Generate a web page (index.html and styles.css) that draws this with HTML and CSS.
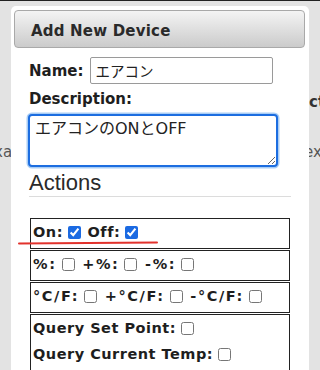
FILE: index.html
```html
<!DOCTYPE html>
<html lang="ja">

<head>
    <meta charset="UTF-8">
    <meta name="viewport" content="width=device-width, initial-scale=1.0">
    <title>Add New Device</title>
    <link rel="stylesheet" href="styles.css">
</head>

<body>
    <!-- The page behind the dialog -->
    <div class="page">
        <p class="bg-line bg-bold">ct</p>
        <p class="bg-line bg-split"><span class="bg-left">xa</span><span class="bg-right">ex</span></p>
    </div>

    <!-- The dialog -->
    <div class="dialog">
        <div class="dialog-header">Add New Device</div>
        <div class="dialog-body">
            <div class="name-row">
                <label for="name">Name:</label>
                <input id="name" type="text" value="エアコン">
            </div>
            <label class="desc-label" for="desc">Description:</label>
            <textarea id="desc">エアコンのONとOFF</textarea>
            <h2 class="section-title">Actions</h2>

            <div class="action-box">On:<input type="checkbox" checked> Off:<input type="checkbox" checked></div>
            <div class="action-box wide">%:<input type="checkbox"> +%:<input type="checkbox"> -%:<input type="checkbox"></div>
            <div class="action-box wide">°C/F:<input type="checkbox"> +°C/F:<input type="checkbox"> -°C/F:<input type="checkbox"></div>
            <div class="action-box tall">
                <div class="action-line">Query Set Point:<input type="checkbox"></div>
                <div class="action-line">Query Current Temp:<input type="checkbox"></div>
            </div>
        </div>
    </div>

    <!-- Hand drawn red underline -->
    <div class="mark"></div>
</body>

</html>
```

FILE: styles.css
```css
/* The basic style of the page */
body {
    margin: 0;
    padding: 0;
    height: 370px;
    overflow: hidden;
    background-color: #e3e3e3;
    border-top: 1px solid #222;
    font-family: 'DejaVu Sans', 'Noto Sans CJK JP', sans-serif;
    color: #1e1e1e;
}

/* The page seen behind the dialog */
.page {
    padding-top: 91px;
    color: #555;
    font-size: 15px;
}

.bg-line {
    margin: 0;
    line-height: 20px;
    white-space: nowrap;
}

.bg-bold {
    font-weight: bold;
    color: #333;
    padding-left: 309px;
}

.bg-split {
    margin-top: 30px;
    display: flex;
}

.bg-left {
    display: inline-block;
    width: 20px;
    margin-left: -6px;
}

.bg-right {
    margin-left: 292px;
}

/* The dialog box */
.dialog {
    position: absolute;
    top: 6px;
    left: 11px;
    width: 298px;
    height: 420px;
    background-color: white;
    border-radius: 5px;
}

.dialog-header {
    margin: 4px 4px 0 3px;
    height: 32px;
    padding: 4px 0 0 16px;
    line-height: 32px;
    border: 1px solid #a9a9a9;
    border-radius: 4px;
    background: linear-gradient(#f4f4f4, #cbcbcb);
    font-weight: bold;
    font-size: 15px;
    letter-spacing: 0.2px;
    color: #2a2a2a;
}

.dialog-body {
    padding: 0 18px 0 18px;
}

/* The name and description fields */
.name-row {
    display: flex;
    align-items: center;
    gap: 7px;
    margin-top: 9px;
    font-weight: bold;
    font-size: 15px;
}

.name-row input {
    width: 183px;
    height: 27px;
    box-sizing: border-box;
    border: 1px solid #9a9a9a;
    border-radius: 2px;
    padding: 0 4px;
    font-family: 'DejaVu Sans', 'Noto Sans CJK JP', sans-serif;
    font-size: 14.5px;
    color: #222;
}

.desc-label {
    display: block;
    margin-top: 5px;
    line-height: 20px;
    font-weight: bold;
    font-size: 15px;
}

textarea {
    display: block;
    box-sizing: border-box;
    width: 250px;
    height: 53px;
    margin: 5px 0 0 -1px;
    padding: 3px 5px;
    border: 2px solid #1c6de0;
    border-radius: 4px;
    box-shadow: 0 0 0 1.5px #a9cdf5;
    outline: none;
    font-family: 'DejaVu Sans', 'Noto Sans CJK JP', sans-serif;
    font-size: 16px;
    line-height: 20px;
    color: #222;
}

/* The actions heading */
.section-title {
    margin: 2px 0 21px 0;
    font-family: 'Liberation Sans', Arial, sans-serif;
    font-weight: normal;
    font-size: 22px;
    line-height: 27px;
    color: #2a2a2a;
    border-bottom: 1px solid #dcdcdc;
}

/* The action boxes */
.action-box {
    box-sizing: border-box;
    width: 260px;
    height: 31px;
    margin: 0 0 1px 1px;
    padding: 0 2px 3px 2px;
    border: 1px solid #222;
    line-height: 26px;
    font-weight: bold;
    font-size: 14.5px;
    letter-spacing: 0.5px;
    white-space: nowrap;
}

.action-box.wide {
    letter-spacing: 1.6px;
}

.action-box.tall {
    height: auto;
    padding-bottom: 20px;
}

.action-box input {
    width: 13px;
    height: 13px;
    margin: 0 1px 0 5px;
    vertical-align: -2px;
    accent-color: #1b6ae2;
}

/* Red underline drawn over the page */
.mark {
    position: absolute;
    left: 18px;
    top: 242px;
    width: 140px;
    height: 2px;
    background-color: #e2322c;
    border-radius: 1px;
    transform: rotate(-0.4deg);
}
```
